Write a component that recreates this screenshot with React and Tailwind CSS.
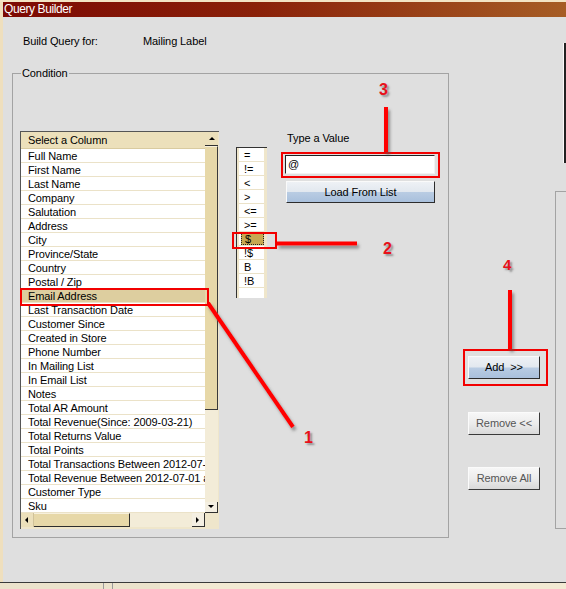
import React from "react";

const columns = [
  "Full Name",
  "First Name",
  "Last Name",
  "Company",
  "Salutation",
  "Address",
  "City",
  "Province/State",
  "Country",
  "Postal / Zip",
  "Email Address",
  "Last Transaction Date",
  "Customer Since",
  "Created in Store",
  "Phone Number",
  "In Mailing List",
  "In Email List",
  "Notes",
  "Total AR Amount",
  "Total Revenue(Since: 2009-03-21)",
  "Total Returns Value",
  "Total Points",
  "Total Transactions Between 2012-07-01 and 2012-07-31",
  "Total Revenue Between 2012-07-01 and 2012-07-31",
  "Customer Type",
  "Sku",
];

const ops = ["=", "!=", "<", ">", "<=", ">=", "$", "!$", "B", "!B"];

function Tri({ dir }) {
  const pts = {
    up: "1,5 4,2 7,5",
    down: "1,2 4,5 7,2",
    left: "5,1 2,4 5,7",
    right: "2,1 5,4 2,7",
  }[dir];
  return (
    <svg width="8" height="8" viewBox="0 0 8 8">
      <polygon points={pts} fill="#000" />
    </svg>
  );
}

function ColumnList() {
  return (
    <div className="w-[199px] h-[398px] border-t border-l border-[#555555] bg-[#efe6cb] flex flex-col shrink-0">
      <div className="flex h-[381px]">
        <div className="w-[184px] flex flex-col overflow-hidden">
          <div className="h-[17px] shrink-0 bg-[#ece0bb] border-b border-[#d9cba0] pl-[7px] pt-[1px] leading-[15px] whitespace-nowrap">
            Select a Column
          </div>
          {columns.map((c) => (
            <div
              key={c}
              className={
                "h-[14px] shrink-0 border-b border-[#ebe2c8] pl-[7px] pt-[1px] leading-[13px] whitespace-nowrap overflow-hidden " +
                (c === "Email Address" ? "bg-[#ddce9f]" : "bg-white")
              }
            >
              {c}
            </div>
          ))}
        </div>
        <div className="w-[13px] flex flex-col bg-[#f3ecd8]">
          <div className="h-[14px] shrink-0 bg-[#ece0bb] border-b border-[#303030] flex items-center justify-center">
            <Tri dir="up" />
          </div>
          <div className="h-[264px] shrink-0 bg-[#e7d8a8] border-r border-b border-[#3a3a3a] border-t border-t-[#f7f0dc]" />
          <div className="flex-1" />
          <div className="h-[11px] shrink-0 bg-[#f4efe2] border-r border-b border-[#303030] flex items-center justify-center">
            <Tri dir="down" />
          </div>
        </div>
        <div className="w-[1px]" />
      </div>
      <div className="flex h-[14px] shrink-0">
        <div className="w-[13px] bg-[#ece0bb] border-r border-[#d0c29a] flex items-center justify-center">
          <Tri dir="left" />
        </div>
        <div className="w-[96px] bg-[#e7d8a8] border-r border-b border-[#2e2e2e] border-t border-t-[#f7f0dc]" />
        <div className="w-[62px] bg-[#f3ecd8]" />
        <div className="w-[13px] bg-[#f4efe2] border-r border-b border-[#303030] flex items-center justify-center">
          <Tri dir="right" />
        </div>
        <div className="flex-1 bg-[#efe6cb]" />
      </div>
    </div>
  );
}

function OpList() {
  return (
    <div className="w-[31px] h-[151px] border-t border-l border-[#333333] bg-[#efe6cb] flex shrink-0">
      <div className="w-[2px]" />
      <div className="w-[25px] bg-white flex flex-col">
        {ops.map((o) => (
          <div
            key={o}
            className="h-[14px] shrink-0 border-b border-[#ebe2c8] flex"
          >
            {o === "$" ? (
              <div className="ml-[2px] flex-1 bg-[#c7a851] border border-dotted border-[#222] pl-[3px] pt-[1px] leading-[11px]">
                {o}
              </div>
            ) : (
              <div className="pl-[5px] pt-[1px] leading-[13px]">{o}</div>
            )}
          </div>
        ))}
      </div>
      <div className="flex-1" />
    </div>
  );
}

const blueBtn =
  "bg-[linear-gradient(to_bottom,#eef1f5_0%,#e2e8ef_48%,#b9cce3_52%,#a9c0dc_100%)] border-t border-l border-t-[#fafafa] border-l-[#fafafa] border-r border-b border-r-[#2c2c2c] border-b-[#2c2c2c] flex items-center justify-center text-black";
const grayBtn =
  "bg-[linear-gradient(to_bottom,#f7f7f7_0%,#ececec_50%,#d9d9d9_100%)] border-t border-l border-t-[#fbfbfb] border-l-[#fbfbfb] border-r border-b border-r-[#3a3a3a] border-b-[#3a3a3a] flex items-center justify-center text-[#555]";

export default function App() {
  return (
    <div className="relative w-[566px] h-[589px] overflow-hidden bg-[#dfdfdf] flex flex-col font-['Liberation_Sans',Arial,sans-serif] text-[11px] tracking-[-0.1px] text-black">
      <div className="h-[2px] shrink-0 bg-[#f3e4c4]" />
      <div className="h-[15px] shrink-0 flex">
        <div className="w-[3px] bg-[#efdfbd]" />
        <div className="flex-1 bg-[linear-gradient(to_right,#7c0903_0%,#8a2109_45%,#a65d25_100%)] text-white text-[12px] leading-[15px] pl-[1px] tracking-[-0.4px]">
          Query Builder
        </div>
      </div>
      <div className="h-[565px] shrink-0 flex">
        <div className="w-[3px] shrink-0 bg-[#efdfbd]" />
        <div className="flex-1 flex flex-col">
          <div className="mt-[18px] ml-[20px] flex leading-[13px]">
            <span className="w-[120px]">Build Query for:</span>
            <span>Mailing Label</span>
          </div>
          <div className="mt-[25px] flex items-start">
            {/* Condition group */}
            <div className="relative ml-[9px] w-[437px] h-[465px] border border-[#a3a3a3] shrink-0 flex items-start">
              <span className="absolute left-[8px] top-[-7px] px-[1px] bg-[#dfdfdf] leading-[13px]">
                Condition
              </span>
              <div className="ml-[7px] mt-[57px]">
                <ColumnList />
              </div>
              <div className="ml-[17px] mt-[73px]">
                <OpList />
              </div>
              <div className="ml-[18px] mt-[58px] flex flex-col">
                <span className="pl-[2px] leading-[13px]">Type a Value</span>
                <div className="mt-[10px] w-[150px] h-[19px] bg-white border-t border-l border-[#222] border-r border-b border-r-[#f2f2f2] border-b-[#f2f2f2] pl-[2px] leading-[16px]">
                  @
                </div>
                <div className={"mt-[7px] ml-[1px] w-[149px] h-[22px] " + blueBtn}>
                  Load From List
                </div>
              </div>
            </div>
            {/* Buttons */}
            <div className="ml-[19px] flex flex-col shrink-0">
              <div className={"mt-[283px] w-[72px] h-[23px] whitespace-pre " + blueBtn}>
                {"Add  >>"}
              </div>
              <div className={"mt-[33px] w-[72px] h-[23px] " + grayBtn}>
                {"Remove <<"}
              </div>
              <div className={"mt-[32px] w-[72px] h-[23px] " + grayBtn}>
                Remove All
              </div>
            </div>
            {/* Right group */}
            <div className="ml-[15px] mt-[118px] w-[40px] h-[338px] border border-[#a3a3a3] shrink-0" />
          </div>
        </div>
      </div>
      <div className="h-[1px] shrink-0 bg-[#3a3a3a]" />
      <div className="h-[6px] shrink-0 flex bg-[#ece3cc]">
        <div className="w-[103px]" />
        <div className="w-[1px] bg-[#9a9a9a]" />
        <div className="w-[8px]" />
        <div className="w-[1px] bg-[#9a9a9a]" />
        <div className="w-[47px]" />
        <div className="flex-1 bg-[#f3ead3]" />
      </div>

      {/* edge of window behind, top right */}
      <div className="absolute left-[563px] top-[43px] w-[3px] h-[120px] border-l border-[#fafafa] bg-[#222]" />

      {/* Annotation overlay */}
      <svg
        className="absolute left-0 top-0 pointer-events-none"
        width="566"
        height="589"
        viewBox="0 0 566 589"
      >
        <defs>
          <filter id="sh" x="-50%" y="-50%" width="200%" height="200%">
            <feDropShadow dx="2" dy="3" stdDeviation="1.5" floodColor="#555" floodOpacity="0.6" />
          </filter>
        </defs>
        <g fill="none" stroke="#f20000" strokeWidth="2">
          <rect x="21" y="289" width="187" height="16" />
          <rect x="233" y="233" width="43" height="15" />
          <rect x="282" y="153" width="157" height="24" />
          <rect x="464" y="350" width="83" height="35" />
        </g>
        <g stroke="#ff0000" strokeWidth="4" filter="url(#sh)" strokeLinecap="butt">
          <line x1="386" y1="107" x2="386" y2="152" />
          <line x1="277" y1="243.5" x2="357" y2="243.5" />
          <line x1="208" y1="303" x2="293" y2="427" />
          <line x1="510" y1="290" x2="510" y2="349" />
        </g>
      </svg>
      <span className="absolute left-[379px] top-[82px] text-[16px] font-bold leading-[16px] tracking-normal text-[#e8101a] [text-shadow:2px_2px_2px_rgba(80,80,80,0.55)]">
        3
      </span>
      <span className="absolute left-[383px] top-[241px] text-[16px] font-bold leading-[16px] tracking-normal text-[#e8101a] [text-shadow:2px_2px_2px_rgba(80,80,80,0.55)]">
        2
      </span>
      <span className="absolute left-[304px] top-[430px] text-[16px] font-bold leading-[16px] tracking-normal text-[#e8101a] [text-shadow:2px_2px_2px_rgba(80,80,80,0.55)]">
        1
      </span>
      <span className="absolute left-[503px] top-[257px] text-[15px] font-bold leading-[16px] tracking-normal text-[#e8101a] [text-shadow:2px_2px_2px_rgba(80,80,80,0.55)]">
        4
      </span>
    </div>
  );
}
